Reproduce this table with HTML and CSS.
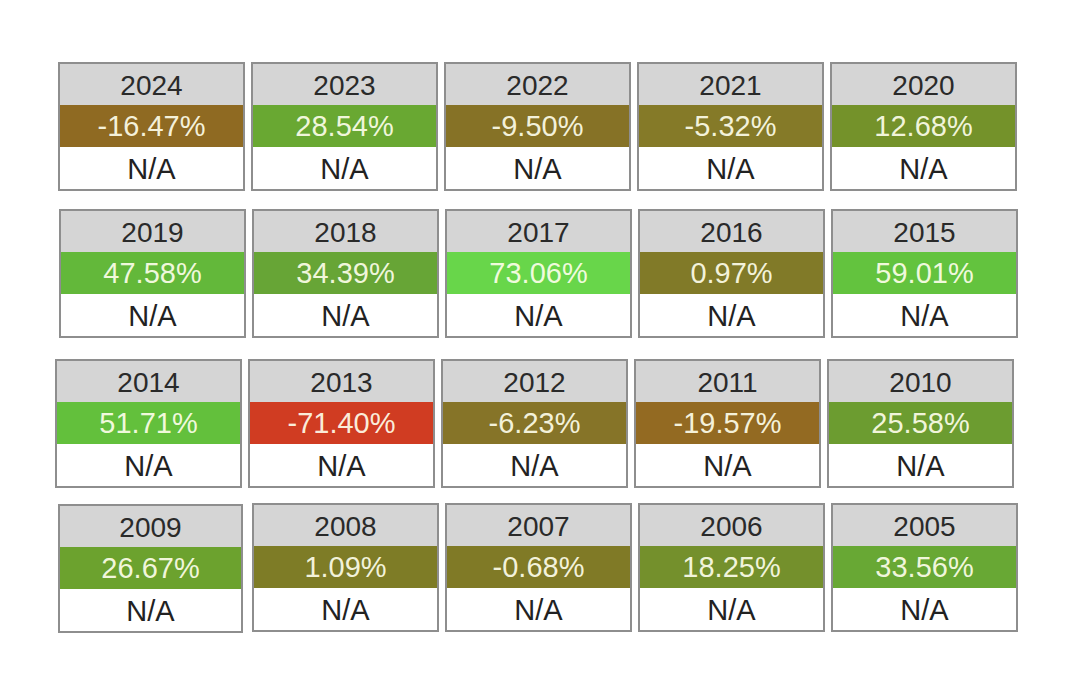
FILE: index.html
```html
<!DOCTYPE html>
<html lang="en">
<head>
<meta charset="utf-8">
<title>Annual Returns</title>
<link rel="stylesheet" href="styles.css">
</head>
<body>
<main class="board">
  <div class="row r1">
    <div class="card"><div class="year">2024</div><div class="pct" style="background:#8f6a22">-16.47%</div><div class="na">N/A</div></div>
    <div class="card"><div class="year">2023</div><div class="pct" style="background:#69a832">28.54%</div><div class="na">N/A</div></div>
    <div class="card"><div class="year">2022</div><div class="pct" style="background:#867226">-9.50%</div><div class="na">N/A</div></div>
    <div class="card"><div class="year">2021</div><div class="pct" style="background:#857a28">-5.32%</div><div class="na">N/A</div></div>
    <div class="card"><div class="year">2020</div><div class="pct" style="background:#74922a">12.68%</div><div class="na">N/A</div></div>
  </div>
  <div class="row r2">
    <div class="card"><div class="year">2019</div><div class="pct" style="background:#63b83a">47.58%</div><div class="na">N/A</div></div>
    <div class="card"><div class="year">2018</div><div class="pct" style="background:#67a536">34.39%</div><div class="na">N/A</div></div>
    <div class="card"><div class="year">2017</div><div class="pct" style="background:#68d64a">73.06%</div><div class="na">N/A</div></div>
    <div class="card"><div class="year">2016</div><div class="pct" style="background:#817a28">0.97%</div><div class="na">N/A</div></div>
    <div class="card"><div class="year">2015</div><div class="pct" style="background:#63c33e">59.01%</div><div class="na">N/A</div></div>
  </div>
  <div class="row r3">
    <div class="card"><div class="year">2014</div><div class="pct" style="background:#63c03c">51.71%</div><div class="na">N/A</div></div>
    <div class="card"><div class="year">2013</div><div class="pct" style="background:#d03c22">-71.40%</div><div class="na">N/A</div></div>
    <div class="card"><div class="year">2012</div><div class="pct" style="background:#867428">-6.23%</div><div class="na">N/A</div></div>
    <div class="card"><div class="year">2011</div><div class="pct" style="background:#936a22">-19.57%</div><div class="na">N/A</div></div>
    <div class="card"><div class="year">2010</div><div class="pct" style="background:#6c9c30">25.58%</div><div class="na">N/A</div></div>
  </div>
  <div class="row r4">
    <div class="card narrow"><div class="year">2009</div><div class="pct" style="background:#6ca22e">26.67%</div><div class="na">N/A</div></div>
    <div class="card"><div class="year">2008</div><div class="pct" style="background:#7e7c26">1.09%</div><div class="na">N/A</div></div>
    <div class="card"><div class="year">2007</div><div class="pct" style="background:#807a26">-0.68%</div><div class="na">N/A</div></div>
    <div class="card"><div class="year">2006</div><div class="pct" style="background:#74902c">18.25%</div><div class="na">N/A</div></div>
    <div class="card"><div class="year">2005</div><div class="pct" style="background:#68a834">33.56%</div><div class="na">N/A</div></div>
  </div>
</main>
</body>
</html>
```
FILE: styles.css
```css
html, body {
  margin: 0;
  padding: 0;
  background: #ffffff;
}

body {
  font-family: "Liberation Sans", Arial, sans-serif;
  color: #2b2b2b;
}

.board {
  display: flex;
  flex-direction: column;
  padding-top: 62px;
}

.row {
  display: flex;
  gap: 6px;
}

.r1 { padding-left: 58px; }
.r2 { padding-left: 59px; margin-top: 18px; }
.r3 { padding-left: 55px; margin-top: 21px; }
.r4 { padding-left: 58px; margin-top: 15px; align-items: flex-start; }

.card {
  width: 187px;
  box-sizing: border-box;
  border: 2px solid #8e8e8e;
  display: flex;
  flex-direction: column;
  text-align: center;
  background: #ffffff;
}

.card.narrow {
  width: 185px;
  margin-top: 1px;
  margin-right: 3px;
}

.year {
  height: 41px;
  line-height: 43px;
  background: #d5d5d5;
  font-size: 28px;
  color: #2a2a2a;
}

.pct {
  height: 42px;
  line-height: 42px;
  font-size: 29px;
  color: rgba(255, 255, 236, 0.92);
}

.na {
  height: 42px;
  line-height: 45px;
  font-size: 29px;
  color: #222222;
  background: #ffffff;
}
```
